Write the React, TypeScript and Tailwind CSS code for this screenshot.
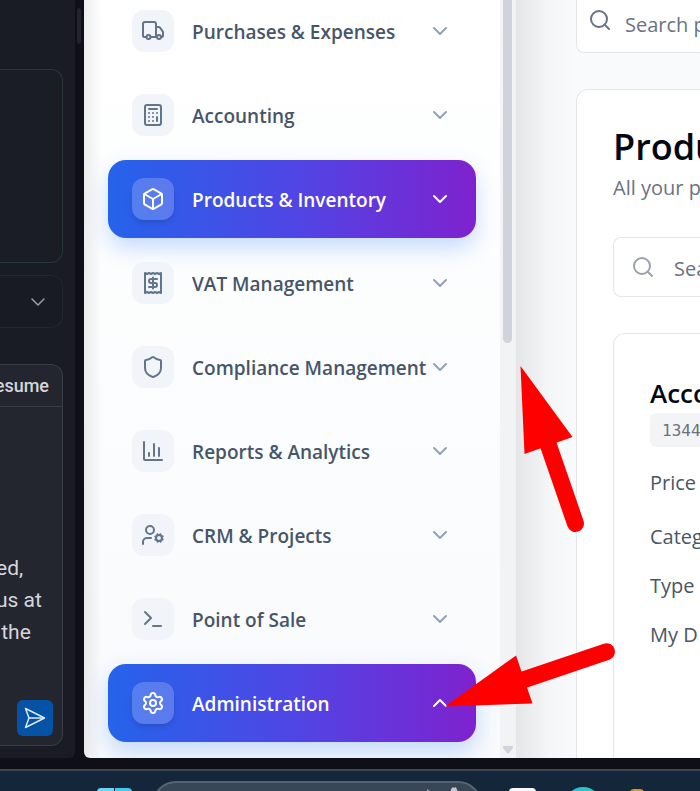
import React from "react";
import {
  Calculator,
  ChevronDown,
  ChevronUp,
  Search,
  Settings,
  Shield,
} from "lucide-react";

type IconProps = { className?: string };

function Glyph({ className, children }: IconProps & { children: React.ReactNode }) {
  return (
    <svg
      viewBox="0 0 24 24"
      fill="none"
      stroke="currentColor"
      strokeWidth="2"
      strokeLinecap="round"
      strokeLinejoin="round"
      className={className}
      aria-hidden="true"
    >
      {children}
    </svg>
  );
}

const TruckIcon = ({ className }: IconProps) => (
  <Glyph className={className}>
    <path d="M5 18H3a1 1 0 0 1-1-1V5a2 2 0 0 1 2-2h9a2 2 0 0 1 2 2v13" />
    <path d="M15 8h2.5a2 2 0 0 1 1.5.7l3 4.1V17a1 1 0 0 1-1 1h-1M9.500 18h5" />
    <circle cx="7.500" cy="18" r="2" />
    <circle cx="18" cy="18" r="2" />
  </Glyph>
);

const BoxIcon = ({ className }: IconProps) => (
  <Glyph className={className}>
    <path d="M21 8a2 2 0 0 0-1-1.730l-7-4a2 2 0 0 0-2 0l-7 4A2 2 0 0 0 3 8v8a2 2 0 0 0 1 1.730l7 4a2 2 0 0 0 2 0l7-4A2 2 0 0 0 21 16Z" />
    <path d="m3.300 7 8.700 5 8.700-5M12 22V12" />
  </Glyph>
);

const ReceiptIcon = ({ className }: IconProps) => (
  <Glyph className={className}>
    <path d="M4 2v20l2-1 2 1 2-1 2 1 2-1 2 1 2-1 2 1V2l-2 1-2-1-2 1-2-1-2 1-2-1-2 1Z" />
    <path d="M16 8h-6a2 2 0 1 0 0 4h4a2 2 0 1 1 0 4H8" />
    <path d="M12 17.500v-11" />
  </Glyph>
);

const ChartIcon = ({ className }: IconProps) => (
  <Glyph className={className}>
    <path d="M3 3v17a1 1 0 0 0 1 1h17" />
    <path d="M8 17v-3M13 17V5M18 17V9" />
  </Glyph>
);

const UserCogIcon = ({ className }: IconProps) => (
  <Glyph className={className}>
    <circle cx="9" cy="7" r="4" />
    <path d="M10 15H6a4 4 0 0 0-4 4v2" />
    <circle cx="18" cy="15" r="3" />
    <path d="m21.700 16.400-.9-.3M15.200 13.900l-.9-.3M16.600 18.700l.3-.9M19.100 12.200l.3-.9M19.600 18.700l-.4-1M16.800 12.300l-.4-1M14.300 16.600l1-.4M20.700 13.800l1-.4" />
  </Glyph>
);

const TerminalIcon = ({ className }: IconProps) => (
  <Glyph className={className}>
    <path d="m4 17 6-6-6-6M12 19h8" />
  </Glyph>
);

const navItems: {
  label: string;
  icon: React.ComponentType<IconProps>;
  active?: boolean;
  open?: boolean;
}[] = [
  { label: "Purchases & Expenses", icon: TruckIcon },
  { label: "Accounting", icon: Calculator },
  { label: "Products & Inventory", icon: BoxIcon, active: true },
  { label: "VAT Management", icon: ReceiptIcon },
  { label: "Compliance Management", icon: Shield },
  { label: "Reports & Analytics", icon: ChartIcon },
  { label: "CRM & Projects", icon: UserCogIcon },
  { label: "Point of Sale", icon: TerminalIcon },
  { label: "Administration", icon: Settings, active: true, open: true },
];

function ChatPanel() {
  return (
    <section className="flex w-[75px] shrink-0 flex-col rounded-br-md bg-[#1a1c25] pr-3 pb-3 pt-[69px] font-['Roboto','Liberation_Sans',sans-serif]">
      <div className="h-[194px] shrink-0 rounded-r-xl border border-l-0 border-[#293836] bg-[#1a1d25]" />
      <button
        type="button"
        aria-label="Expand"
        className="mt-3 flex h-[53px] shrink-0 items-center justify-end rounded-r-xl border border-l-0 border-[#232631] bg-[#191b24] pr-3 text-[#9a9ca6]"
      >
        <ChevronDown className="size-6" strokeWidth={1.5} />
      </button>
      <div className="mt-9 flex min-h-0 flex-1 flex-col overflow-hidden rounded-r-xl border border-l-0 border-[#393b46] bg-[#24262f]">
        <div className="flex h-[42px] shrink-0 justify-end border-b border-[#393b46] pr-[13px]">
          <button type="button" className="text-lg font-medium text-[#d5d6da]">
            Resume
          </button>
        </div>
        <textarea
          aria-label="Message"
          className="-ml-1 mt-auto h-24 w-[66px] shrink-0 resize-none overflow-hidden whitespace-pre bg-transparent text-[21px] leading-8 text-[#d5d6da] outline-none"
          defaultValue={"ed,\nus at\n the"}
        />
        <div className="flex justify-end pb-[9px] pr-[9px] pt-[52px]">
          <button
            type="button"
            aria-label="Send"
            className="flex size-9 items-center justify-center rounded-md bg-[#0453a7] text-[#dfe8f3]"
          >
            <svg viewBox="0 0 24 24" fill="none" stroke="currentColor" strokeWidth="1.500" strokeLinejoin="round" className="size-6" aria-hidden="true">
              <path d="M2.500 2.500 21.500 12l-19 9.500L6 12Z" />
              <path d="M6 12h15" />
            </svg>
          </button>
        </div>
      </div>
    </section>
  );
}

function Sidebar() {
  return (
    <aside className="flex w-[432px] shrink-0 bg-[linear-gradient(to_right,rgba(0,0,0,0.07),rgba(0,0,0,0)_18px),linear-gradient(to_bottom,#ffffff,#f8fafc)]">
      <nav className="-mt-2 flex min-w-0 flex-1 flex-col gap-1.5 px-6">
        {navItems.map(({ label, icon: Icon, active, open }) => (
          <button
            key={label}
            type="button"
            aria-expanded={!!open}
            className={
              active
                ? "flex h-[78px] shrink-0 items-center rounded-[18px] bg-linear-to-r/srgb from-[#2563eb] via-[#4f46e5] to-[#7e22ce] px-6 text-white shadow-[0_10px_22px_rgba(59,130,246,0.28)]"
                : "flex h-[78px] shrink-0 items-center rounded-[18px] px-6 text-[#475569]"
            }
          >
            <span
              className={
                active
                  ? "flex size-[42px] shrink-0 items-center justify-center rounded-xl bg-white/20 shadow-md"
                  : "flex size-[42px] shrink-0 items-center justify-center rounded-xl bg-slate-100 text-[#64748b]"
              }
            >
              <Icon className="size-6" />
            </span>
            <span className="ml-[18px] min-w-0 flex-1 whitespace-nowrap pt-[3px] text-left text-[19px] font-semibold">
              {label}
            </span>
            {open ? (
              <ChevronUp className="size-6 shrink-0" />
            ) : (
              <ChevronDown className={active ? "size-6 shrink-0" : "size-6 shrink-0 text-slate-400"} />
            )}
          </button>
        ))}
      </nav>
      <div className="flex w-4 shrink-0 flex-col items-center justify-between bg-[#f2f3f5] pb-1 pr-px" aria-hidden="true">
        <div className="h-[343px] w-[9px] rounded-b-full bg-[#d0d3dc]" />
        <svg viewBox="0 0 10 8" className="h-2 w-2.5 fill-[#d0d3d9]">
          <path d="M1 0h8q1 0 1 1v1L6 7q-1 1-2 0L0 2V1q0-1 1-1Z" />
        </svg>
      </div>
    </aside>
  );
}

function ProductsPage() {
  return (
    <main className="flex min-w-0 flex-1 flex-col overflow-hidden whitespace-nowrap bg-[linear-gradient(to_right,#e4e6e8,#f4f6f8_34px,#f9fafb_60px)] pl-[60px] text-xl">
      <label className="flex h-[53px] shrink-0 items-start rounded-bl-lg border-b border-l border-[#e3e5e9] bg-white pl-[11px] pt-2 text-gray-500">
        <Search className="size-6 shrink-0" />
        <input
          aria-label="Search products"
          placeholder="Search products"
          className="ml-[13px] h-8 w-48 shrink-0 outline-none placeholder:text-gray-500"
        />
      </label>
      <section className="mt-9 flex flex-1 flex-col rounded-tl-xl border-l border-t border-[#e3e5e9] bg-white pl-9 pt-9">
        <h1 className="h-[42px] text-4xl leading-[42px] font-semibold text-[#030712]">Products</h1>
        <p className="mt-1 leading-8 text-gray-500">All your products</p>
        <label className="mt-[33px] flex h-[60px] shrink-0 items-center rounded-l-lg border border-r-0 border-gray-200 pl-[17px] text-gray-400">
          <Search className="size-6 shrink-0" />
          <input
            aria-label="Search"
            placeholder="Search"
            className="ml-[19px] w-40 shrink-0 pt-[3px] outline-none placeholder:text-gray-500"
          />
        </label>
        <article className="mt-9 flex-1 rounded-tl-xl border-l border-t border-gray-200 pl-9 pt-10 text-gray-600">
          <h2 className="text-[26px] leading-[38px] font-semibold text-[#030712]">Account</h2>
          <span className="mt-px block h-[34px] w-24 rounded-md bg-gray-100 pl-3 font-['DejaVu_Sans_Mono',monospace] text-base leading-[36px] text-gray-500">
            1344
          </span>
          <div className="mt-5 leading-8">Price</div>
          <div className="mt-[22px] leading-8">Category</div>
          <div className="mt-[17px] leading-8">Type</div>
          <div className="mt-[17px] leading-8">My D</div>
        </article>
      </section>
    </main>
  );
}

function Taskbar() {
  return (
    <footer className="mt-[11px] flex h-[22px] shrink-0 items-start overflow-hidden border-t-2 border-[#3a4653] bg-[#13263a] pl-[97px]">
      <div className="mt-[17px] flex gap-px">
        <span className="h-4 w-[17px] rounded-tl-sm bg-[#6fd3f5]" />
        <span className="h-4 w-[17px] rounded-tr-sm bg-[#42c8f2]" />
      </div>
      <div className="ml-5 mt-2.5 flex h-12 w-[330px] shrink-0 items-start justify-end rounded-full border-2 border-[#566571] bg-[#374755] pr-5">
        <svg viewBox="0 0 36 8" className="mt-1 h-2 w-9 fill-[#c5c2d4]" aria-hidden="true">
          <path d="m3 2 4 3v3H5Z" />
          <path d="M27 8V2l2-2 1 1 2-1 1 3 2 2-2 3Z" />
        </svg>
      </div>
      <span className="ml-[27px] mt-[17px] h-8 w-[27px] shrink-0 rounded-sm bg-[#f7f8fb]" />
      <span className="ml-[29px] mt-4 size-9 shrink-0 rounded-full bg-linear-to-r from-[#2cb6e4] to-[#35cba4]" />
      <span className="ml-[29px] mt-[18px] h-8 w-3.5 shrink-0 rounded-sm bg-[#d99c0b]" />
    </footer>
  );
}

function Arrows() {
  return (
    <svg
      className="pointer-events-none absolute left-0 top-0 h-[791px] w-[700px]"
      viewBox="0 0 700 791"
      fill="#ff0000"
      stroke="#ff0000"
      aria-hidden="true"
    >
      <path stroke="none" d="M520.500 366 572.500 437 524.500 454Z" />
      <path strokeWidth="17" strokeLinecap="round" d="M547 441 575.500 523.500" />
      <path stroke="none" d="M445 706.500 516 655.500 532.500 703.500Z" />
      <path strokeWidth="17" strokeLinecap="round" d="M520 681 606.500 651.700" />
    </svg>
  );
}

export default function App() {
  return (
    <div className="relative flex h-screen flex-col overflow-hidden bg-[#0f0f17] font-['Open_Sans','Noto_Sans',sans-serif]">
      <div className="flex min-h-0 flex-1">
        <ChatPanel />
        <div className="flex w-[9px] shrink-0 justify-center pr-px pt-2" aria-hidden="true">
          <div className="h-9 w-1 rounded-full bg-[#22232d]" />
        </div>
        <div className="flex min-w-0 flex-1 overflow-hidden rounded-bl-md">
          <Sidebar />
          <ProductsPage />
        </div>
      </div>
      <Taskbar />
      <Arrows />
    </div>
  );
}
